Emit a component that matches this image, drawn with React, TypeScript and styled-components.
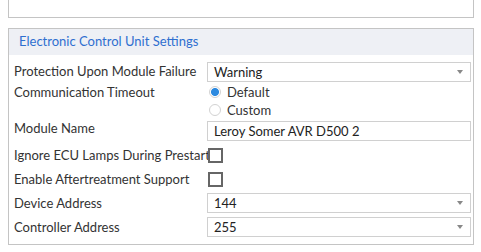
import React from 'react';
import styled, { createGlobalStyle } from 'styled-components';

const GlobalStyle = createGlobalStyle`
  body {
    margin: 0;
    padding: 0 4px 0 8px;
    background: #ffffff;
    font-family: Lato, "Open Sans", sans-serif;
    font-size: 13px;
    color: #333333;
  }
`;

function App() {
  return (
    <>
      <GlobalStyle />
      <TopBox />
      <Panel>
        <PanelHeader>Electronic Control Unit Settings</PanelHeader>
        <PanelBody>
          <Row h={21} top>
            <Label>Protection Upon Module Failure</Label>
            <Select value="Warning" />
          </Row>
          <Row h={36} top>
            <Label>Communication Timeout</Label>
            <RadioGroup>
              <Radio checked text="Default" />
              <Radio text="Custom" />
            </RadioGroup>
          </Row>
          <Row h={24} top>
            <Label>Module Name</Label>
            <TextInput>Leroy Somer AVR D500 2</TextInput>
          </Row>
          <Row h={24}>
            <Label>Ignore ECU Lamps During Prestart</Label>
            <Checkbox />
          </Row>
          <Row h={24}>
            <Label>Enable Aftertreatment Support</Label>
            <Checkbox />
          </Row>
          <Row h={24}>
            <Label>Device Address</Label>
            <Select value="144" />
          </Row>
          <Row h={24}>
            <Label>Controller Address</Label>
            <Select value="255" />
          </Row>
        </PanelBody>
      </Panel>
    </>
  );
}

function Select({ value }: { value: string }) {
  return (
    <SelectBox>
      <span>{value}</span>
      <Caret />
    </SelectBox>
  );
}

function Radio({ checked, text }: { checked?: boolean; text: string }) {
  return (
    <RadioLine>
      <RadioDot checked={checked} />
      {text}
    </RadioLine>
  );
}

const TopBox = styled.div`
  height: 17px;
  border: 1px solid #c4c4c4;
  border-top: none;
  margin-right: 3px;
`;

const Panel = styled.section`
  margin-top: 10px;
  margin-right: 3px;
  border: 1px solid #c4c4c4;
  box-shadow: 0 5px 0 -4px #cfcfcf;
`;

const PanelHeader = styled.div`
  height: 26px;
  line-height: 25px;
  padding-left: 10px;
  background: #eef0f5;
  color: #2e6fd0;
  font-size: 13px;
`;

const PanelBody = styled.div`
  padding: 7px 2px 5px 5px;
`;

const Row = styled.div<{ h: number; top?: boolean }>`
  display: grid;
  grid-template-columns: 193px 1fr;
  align-items: ${(p) => (p.top ? 'start' : 'center')};
  height: ${(p) => p.h}px;
`;

const Label = styled.div`
  white-space: nowrap;
  line-height: 18px;
  color: #333333;
`;

const SelectBox = styled.div`
  height: 20px;
  box-sizing: border-box;
  border: 1px solid #d0d0d0;
  display: flex;
  align-items: center;
  justify-content: space-between;
  padding: 0 7px 0 6px;
  color: #222222;
`;

const Caret = styled.span`
  width: 0;
  height: 0;
  border-left: 3px solid transparent;
  border-right: 3px solid transparent;
  border-top: 4px solid #888888;
`;

const TextInput = styled.div`
  margin-top: 2px;
  height: 20px;
  line-height: 18px;
  box-sizing: border-box;
  border: 1px solid #d0d0d0;
  padding: 0 6px;
  color: #222222;
`;

const RadioGroup = styled.div`
  display: flex;
  flex-direction: column;
`;

const RadioLine = styled.div`
  display: flex;
  align-items: center;
  height: 18px;
  gap: 6px;
  padding-left: 2px;
  color: #333333;
`;

const RadioDot = styled.span<{ checked?: boolean }>`
  width: 12px;
  height: 12px;
  box-sizing: border-box;
  border-radius: 50%;
  border: 1px solid #d2d2d2;
  background: ${(p) => (p.checked ? 'radial-gradient(circle, #2d8ae0 0 3.6px, #ffffff 4.4px)' : '#ffffff')};
`;

const Checkbox = styled.span`
  width: 15px;
  height: 15px;
  margin-left: 1px;
  box-sizing: border-box;
  border: 2px solid #666666;
  background: #ffffff;
`;

export default App;
